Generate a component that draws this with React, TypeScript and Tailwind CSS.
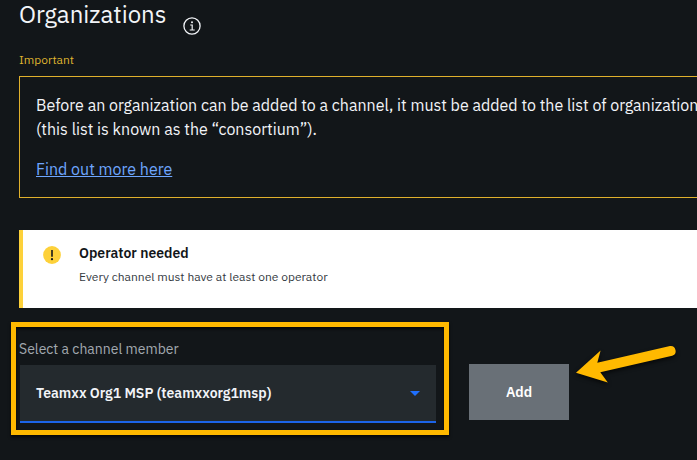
function InfoIcon() {
  return (
    <svg className="mt-[17px] h-[18px] w-[18px] shrink-0" viewBox="0 0 18 18" fill="none" stroke="#f2f4f8">
      <circle cx="9" cy="9" r="8.1" strokeWidth="1.3" />
      <path d="M7.2 8h2v5M6.7 13h5" strokeWidth="1.2" />
      <circle cx="9" cy="5.2" r="1" fill="#f2f4f8" stroke="none" />
    </svg>
  );
}

function WarningIcon() {
  return (
    <svg className="mt-[16px] h-[18px] w-[18px] shrink-0" viewBox="0 0 18 18">
      <circle cx="9" cy="9" r="8.9" fill="#fdd13a" />
      <path d="M8.2 4h1.6v6.8H8.2z" fill="#121619" />
      <circle cx="9" cy="13.2" r="1.1" fill="#121619" />
    </svg>
  );
}

function Arrow() {
  return (
    <svg
      className="pointer-events-none absolute left-[565px] top-[335px] h-[60px] w-[125px] drop-shadow-[0_2px_2px_rgba(0,0,0,0.7)]"
      viewBox="565 335 125 60"
    >
      <path
        d="M576 372.7 600.6 350.4 597.3 362.7 670 346.1A5 5 0 0 1 672.2 355.8L600.3 372.3 607.8 382.6Z"
        fill="#ffb900"
      />
    </svg>
  );
}

export default function App() {
  return (
    <div className="relative h-[460px] w-full overflow-hidden bg-[#121619] pl-[19px] font-['IBM_Plex_Sans',Roboto,sans-serif] text-[#f2f4f8]">
      <header className="flex h-[52px] items-start">
        <h1 className="w-[164px] whitespace-nowrap text-[24px] leading-[28px]">Organizations</h1>
        <InfoIcon />
      </header>

      <p className="h-[24px] whitespace-nowrap text-[12px] leading-[16px] text-[#dfb42f]">Important</p>

      <section className="h-[122px] w-[760px] border border-[#dfb02c] px-[16px] pt-[16px] text-[16px] leading-[24px]">
        <p className="whitespace-nowrap">
          Before an organization can be added to a channel, it must be added to the list of organizations
          <br />
          (this list is known as the “consortium”).
        </p>
        <a href="#" className="mt-[16px] inline-block whitespace-nowrap text-[#6ea6ff] underline">
          Find out more here
        </a>
      </section>

      <section className="mt-[32px] flex h-[78px] border-l-4 border-[#fdd13a] bg-white pl-[20px] text-[#121619]">
        <WarningIcon />
        <div className="ml-[18px] pt-[13px]">
          <h2 className="whitespace-nowrap text-[14px] font-semibold leading-[20px]">Operator needed</h2>
          <p className="mt-[5px] whitespace-nowrap text-[12px] leading-[18px] text-[#343a3f]">
            Every channel must have at least one operator
          </p>
        </div>
      </section>

      <div className="mt-[31px] flex">
        <div className="w-[417px]">
          <label className="block h-[26px] whitespace-nowrap text-[14px] leading-[20px] text-[#a2a9b0]">
            Select a channel member
          </label>
          <button className="ml-px flex h-[58px] w-[416px] items-center justify-between border-b-2 border-[#1c64e8] bg-[#242a2e] pl-[16px] pr-[16px] text-[14px] font-semibold">
            <span className="whitespace-nowrap">Teamxx Org1 MSP (teamxxorg1msp)</span>
            <svg className="h-[5px] w-[10px]" viewBox="0 0 10 5">
              <path d="M0 0h10L5 5z" fill="#1f70ff" />
            </svg>
          </button>
        </div>
        <button className="ml-[33px] mt-[25px] h-[56px] w-[100px] bg-[#697077] text-[14px] font-semibold text-white">
          Add
        </button>
      </div>

      <div className="pointer-events-none absolute left-[11px] top-[322px] h-[113px] w-[438px] border-[5px] border-[#ffb900] shadow-[0_2px_3px_rgba(0,0,0,0.7),inset_0_2px_3px_rgba(0,0,0,0.7)]" />
      <Arrow />
    </div>
  );
}
